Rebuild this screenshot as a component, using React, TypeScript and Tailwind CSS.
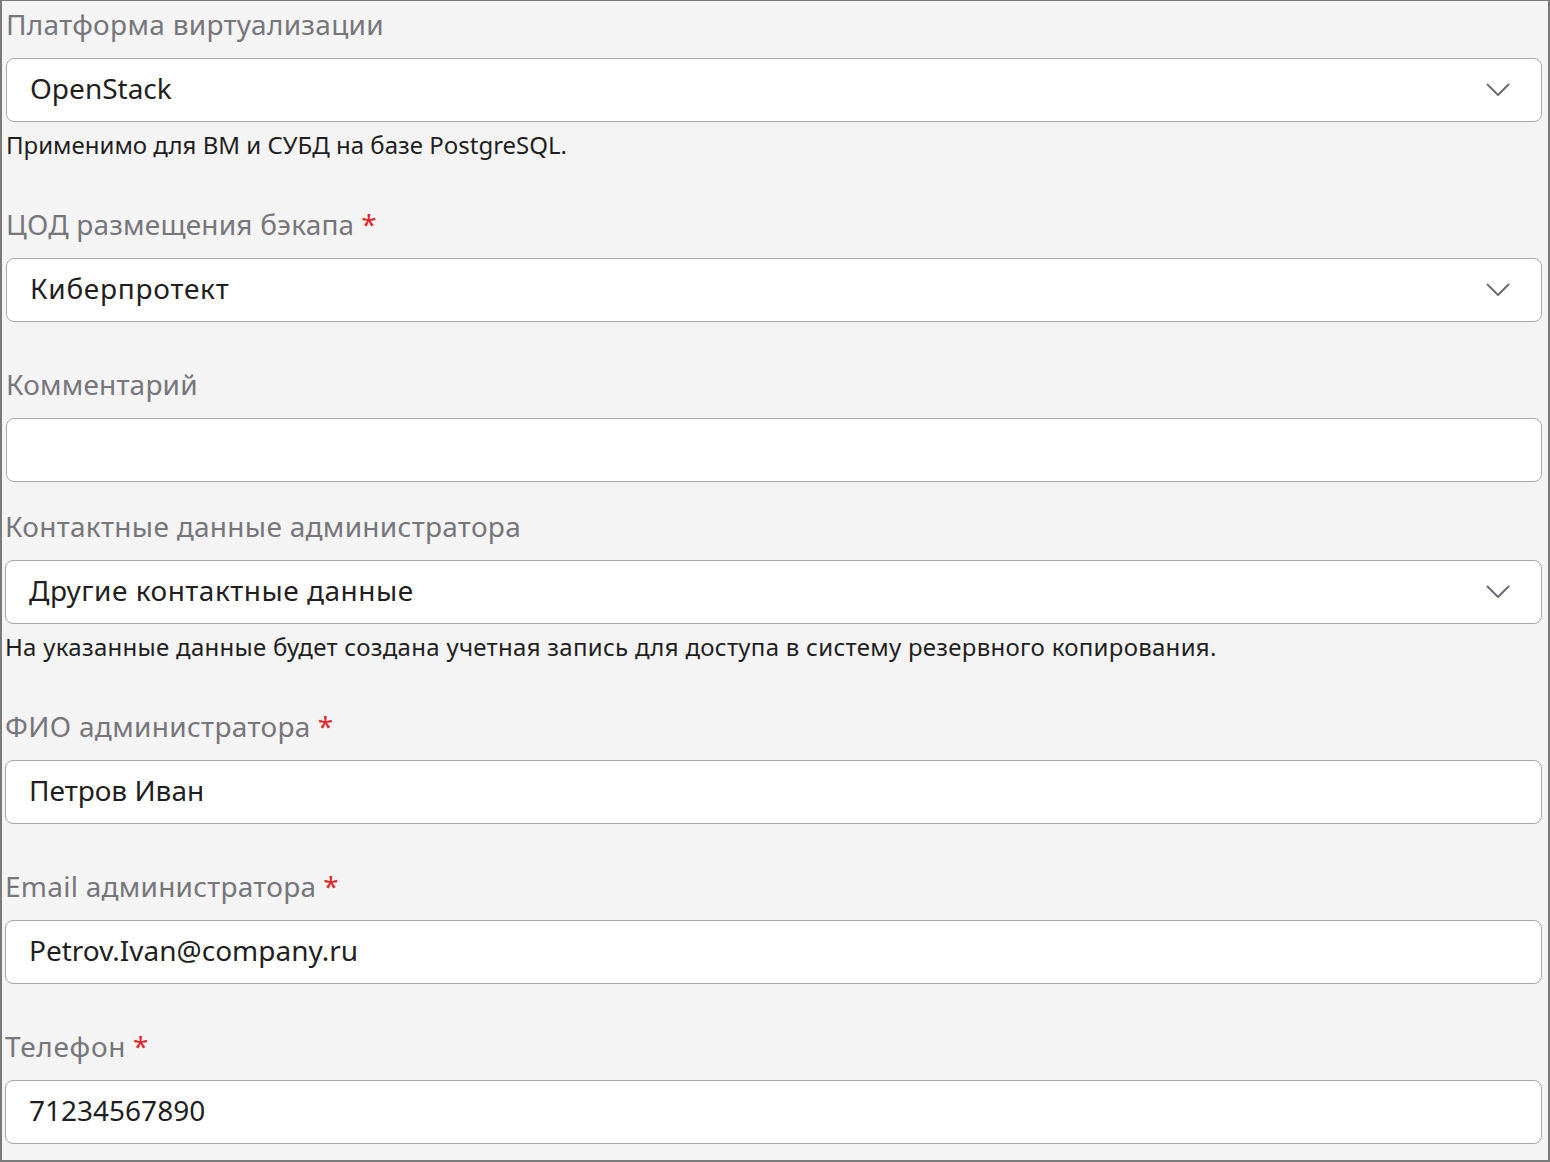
import React from "react";

function Chevron() {
  return (
    <svg width="24" height="14" viewBox="0 0 24 14" fill="none" className="shrink-0">
      <path d="M1.5 1.5 L12 12 L22.5 1.5" stroke="#6c6c74" strokeWidth="2" strokeLinecap="round" strokeLinejoin="round" />
    </svg>
  );
}

function Label({ text, required, track = "tracking-[0.3px]" }: { text: string; required?: boolean; track?: string }) {
  return (
    <div className="h-[40px] flex items-center text-[28px] leading-[40px] text-[#76767b]">
      <span className={track}>{text}</span>
      {required && <span className="ml-[7px] text-[#e0262b]">*</span>}
    </div>
  );
}

function Box({ value, select, track = "" }: { value: string; select?: boolean; track?: string }) {
  return (
    <div className="mt-[14px] h-[64px] rounded-[8px] border-[1.5px] border-[#a9a9ae] bg-white flex items-center pl-[23px] pr-[31px]">
      <span className={"flex-1 pb-[4px] text-[28px] text-[#1f1f22] leading-[40px] " + track}>{value}</span>
      {select && <Chevron />}
    </div>
  );
}

function Helper({ text, track = "" }: { text: string; track?: string }) {
  return <div className={"mt-[7px] h-[32px] leading-[32px] text-[24px] text-[#1f1f22] " + track}>{text}</div>;
}

export default function App() {
  return (
    <div
      className="w-[1550px] h-[1162px] border-2 border-[#7a7a7a] border-t-[1px] bg-[#f4f4f4] pt-[4px] pl-[4px] pr-[6px] overflow-hidden"
      style={{ fontFamily: '"Noto Sans", sans-serif' }}
    >
      <div className="-mt-[1px]">
        <Label text="Платформа виртуализации" />
        <Box value="OpenStack" select />
        <Helper text="Применимо для ВМ и СУБД на базе PostgreSQL." />
      </div>

      <div className="mt-[43px]">
        <Label text="ЦОД размещения бэкапа" required track="tracking-[0.2px]" />
        <Box value="Киберпротект" select track="tracking-[0.75px]" />
      </div>

      <div className="mt-[42px]">
        <Label text="Комментарий" track="tracking-[0.2px]" />
        <Box value="" />
      </div>

      <div className="mt-[24px] -ml-[1px]">
        <Label text="Контактные данные администратора" />
        <Box value="Другие контактные данные" select track="tracking-[0.5px]" />
        <Helper text="На указанные данные будет создана учетная запись для доступа в систему резервного копирования." track="tracking-[0.28px]" />
      </div>

      <div className="mt-[43px] -ml-[1px]">
        <Label text="ФИО администратора" required track="tracking-[0.33px]" />
        <Box value="Петров Иван" />
      </div>

      <div className="mt-[42px] -ml-[1px]">
        <Label text="Email администратора" required track="tracking-[0.25px]" />
        <Box value="Petrov.Ivan@company.ru" />
      </div>

      <div className="mt-[42px] -ml-[1px]">
        <Label text="Телефон" required track="tracking-[0.7px]" />
        <Box value="71234567890" />
      </div>
    </div>
  );
}
